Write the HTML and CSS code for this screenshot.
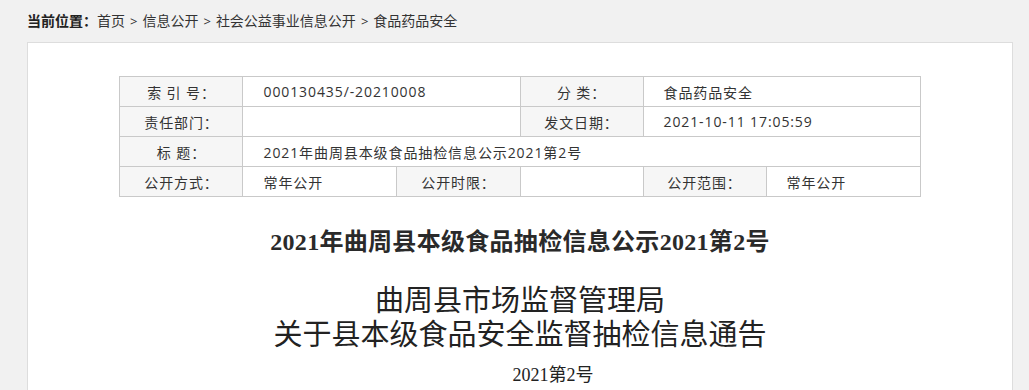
FILE: index.html
```html
<!DOCTYPE html>
<html lang="zh-CN">
<head>
    <meta charset="UTF-8">
    <meta name="viewport" content="width=device-width, initial-scale=1.0">
    <title>2021年曲周县本级食品抽检信息公示2021第2号</title>
    <link rel="stylesheet" href="styles.css">
</head>
<body>
    <div class="wrap">
        <div class="crumb">
            <b>当前位置：</b><a href="#">首页</a><span class="sep">&gt;</span><a href="#">信息公开</a><span class="sep">&gt;</span><a href="#">社会公益事业信息公开</a><span class="sep">&gt;</span><a href="#">食品药品安全</a>
        </div>

        <div class="card">
            <table class="meta">
                <colgroup>
                    <col class="c-label">
                    <col class="c-wide">
                    <col class="c-label">
                    <col class="c-label">
                    <col class="c-label">
                    <col class="c-wide">
                </colgroup>
                <tr>
                    <th>索 引 号：</th>
                    <td colspan="2">000130435/-20210008</td>
                    <th>分 类：</th>
                    <td colspan="2">食品药品安全</td>
                </tr>
                <tr>
                    <th>责任部门：</th>
                    <td colspan="2"></td>
                    <th>发文日期：</th>
                    <td colspan="2">2021-10-11 17:05:59</td>
                </tr>
                <tr>
                    <th>标 题：</th>
                    <td colspan="5">2021年曲周县本级食品抽检信息公示2021第2号</td>
                </tr>
                <tr>
                    <th>公开方式：</th>
                    <td>常年公开</td>
                    <th>公开时限：</th>
                    <td></td>
                    <th>公开范围：</th>
                    <td>常年公开</td>
                </tr>
            </table>

            <h1 class="title">2021年曲周县本级食品抽检信息公示2021第2号</h1>

            <div class="article">
                <p class="sub">曲周县市场监督管理局<br>关于县本级食品安全监督抽检信息通告</p>
                <p class="num">2021第2号</p>
            </div>
        </div>
    </div>
</body>
</html>
```

FILE: styles.css
```css
body {
    margin: 0;
    background-color: #f1f1f1;
    font-family: "Open Sans", "Noto Sans CJK SC", sans-serif;
    color: #333;
}
.wrap {
    width: 986px;
    margin-left: 27px;
}
.crumb {
    height: 42px;
    line-height: 42px;
    font-size: 14px;
    color: #333;
}
.crumb b {
    font-weight: bold;
    color: #222;
}
.crumb a {
    color: #333;
    text-decoration: none;
}
.crumb .sep {
    margin: 0 5px;
    font-size: 13px;
}
.card {
    background-color: #fff;
    border: 1px solid #ddd;
    border-bottom: none;
    padding-top: 33px;
    min-height: 340px;
}
.meta {
    width: 800px;
    margin: 0 auto;
    border-collapse: collapse;
    table-layout: fixed;
    font-size: 14px;
}
.c-label {
    width: 123px;
}
.c-wide {
    width: 154px;
}
.meta th,
.meta td {
    height: 29px;
    padding: 0;
    border: 1px solid #c9c9c9;
    font-weight: normal;
    color: #333;
    white-space: nowrap;
    letter-spacing: 0.9px;
}
.meta th {
    background-color: #f6f6f6;
    text-align: center;
}
.meta td {
    text-align: left;
    padding-left: 20px;
}
.title {
    margin: 28px 0 0;
    font-family: "Liberation Serif", "Noto Sans CJK SC", serif;
    font-size: 24px;
    line-height: 34px;
    letter-spacing: 0.3px;
    font-weight: bold;
    color: #2a2a2a;
    text-align: center;
}
.article {
    font-family: "Liberation Serif", "Noto Sans CJK SC", serif;
    text-align: center;
    color: #222;
}
.sub {
    margin: 25px 0 0;
    font-size: 29px;
    line-height: 34px;
}
.num {
    margin: 8px 0 0;
    font-size: 18px;
    line-height: 30px;
    text-indent: 66px;
}
```
